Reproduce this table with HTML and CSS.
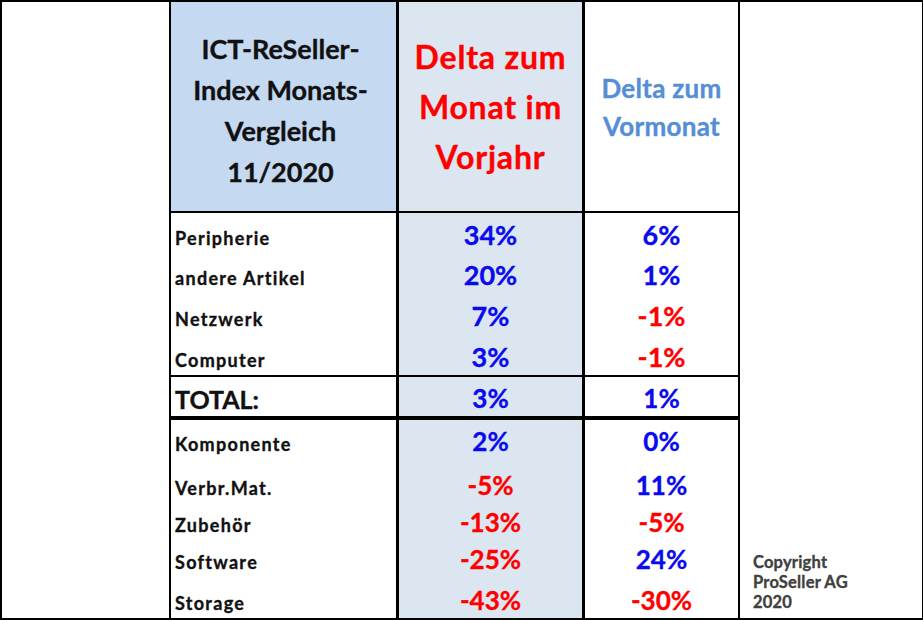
FILE: index.html
```html
<!DOCTYPE html>
<html lang="de">
<head>
<meta charset="utf-8">
<title>ICT-ReSeller-Index</title>
<link rel="stylesheet" href="styles.css">
</head>
<body>
<div class="frame">
  <div class="spacer"></div>
  <div class="sheet">
    <div class="cell head c1"><div class="h-index">ICT-ReSeller-<br>Index Monats-<br>Vergleich<br>11/2020</div></div>
    <div class="cell head c2"><div class="h-year">Delta zum<br>Monat im<br>Vorjahr</div></div>
    <div class="cell head c3"><div class="h-month">Delta zum<br>Vormonat</div></div>

    <div class="cell c1 lbl top2">Peripherie</div>
    <div class="cell c2 val up top2">34%</div>
    <div class="cell c3 val up top2">6%</div>

    <div class="cell c1 lbl">andere Artikel</div>
    <div class="cell c2 val up">20%</div>
    <div class="cell c3 val up">1%</div>

    <div class="cell c1 lbl">Netzwerk</div>
    <div class="cell c2 val up">7%</div>
    <div class="cell c3 val down">-1%</div>

    <div class="cell c1 lbl">Computer</div>
    <div class="cell c2 val up">3%</div>
    <div class="cell c3 val down">-1%</div>

    <div class="cell c1 total top2">TOTAL:</div>
    <div class="cell c2 val tval up top2">3%</div>
    <div class="cell c3 val tval up top2">1%</div>

    <div class="cell c1 lbl top4">Komponente</div>
    <div class="cell c2 val lo up top4">2%</div>
    <div class="cell c3 val lo up top4">0%</div>

    <div class="cell c1 lbl">Verbr.Mat.</div>
    <div class="cell c2 val lo down">-5%</div>
    <div class="cell c3 val lo up">11%</div>

    <div class="cell c1 lbl">Zubehör</div>
    <div class="cell c2 val lo down">-13%</div>
    <div class="cell c3 val lo down">-5%</div>

    <div class="cell c1 lbl">Software</div>
    <div class="cell c2 val lo down">-25%</div>
    <div class="cell c3 val lo up">24%</div>

    <div class="cell c1 lbl">Storage</div>
    <div class="cell c2 val lo down">-43%</div>
    <div class="cell c3 val lo down">-30%</div>
  </div>
  <div class="side">
    <p class="copy">Copyright<br>ProSeller AG<br>2020</p>
  </div>
</div>
</body>
</html>
```

FILE: styles.css
```css
html, body {
  margin: 0;
  padding: 0;
  background: #ffffff;
}

body {
  font-family: Lato, "Open Sans", "DejaVu Sans", sans-serif;
  font-weight: 700;
  color: #111111;
  -webkit-text-stroke: 0.35px currentColor;
}

.frame {
  box-sizing: border-box;
  width: 923px;
  height: 620px;
  border: 2px solid #000000;
  border-right-width: 1px;
  display: flex;
  background: #ffffff;
}

.spacer {
  width: 167px;
  flex: none;
}

.sheet {
  flex: none;
  display: grid;
  grid-template-columns: 225px 183px 153px;
  grid-template-rows: 209px 42px 40px 41px 41px 41px 43px 44px 37px 37px 41px;
  column-gap: 3px;
  background: #000000;
  border-left: 2px solid #000000;
  border-right: 2px solid #000000;
}

.cell {
  box-sizing: border-box;
  display: flex;
  align-items: flex-end;
  background: #ffffff;
}

.c1 { background: #ffffff; }
.c2 { background: #dce6f1; justify-content: center; }
.c3 { background: #ffffff; justify-content: center; }

.head {
  align-items: center;
  justify-content: center;
  text-align: center;
}

.head.c1 {
  background: #c5d9f1;
  padding-top: 6px;
}

.top2 { border-top: 2px solid #000000; }
.top4 { border-top: 4px solid #000000; }

.h-index {
  font-size: 27px;
  line-height: 41px;
  color: #111111;
  margin-left: -6px;
}

.h-year {
  font-size: 32px;
  line-height: 50px;
  letter-spacing: 0.8px;
  color: #ff0000;
}

.h-month {
  font-size: 26px;
  line-height: 38px;
  letter-spacing: 0.3px;
  color: #558ed5;
}

.lbl {
  padding-left: 4px;
  padding-bottom: 3px;
  font-size: 18px;
  line-height: 1.2;
  letter-spacing: 1.3px;
}

.total {
  padding-left: 4px;
  padding-bottom: 2px;
  font-size: 25px;
  line-height: 1.2;
}

.val {
  font-size: 27px;
  line-height: 1.2;
  padding-bottom: 2px;
}

.tval {
  font-size: 26px;
  padding-bottom: 2px;
}

.lo {
  font-size: 26px;
}

.up { color: #0a0aee; }
.down { color: #ff0000; }

.side {
  flex: 1;
  display: flex;
  flex-direction: column;
  justify-content: flex-end;
  padding-left: 13px;
  padding-bottom: 6px;
}

.copy {
  margin: 0;
  font-size: 16.5px;
  line-height: 20px;
  letter-spacing: 0.2px;
  color: #404040;
}
```
